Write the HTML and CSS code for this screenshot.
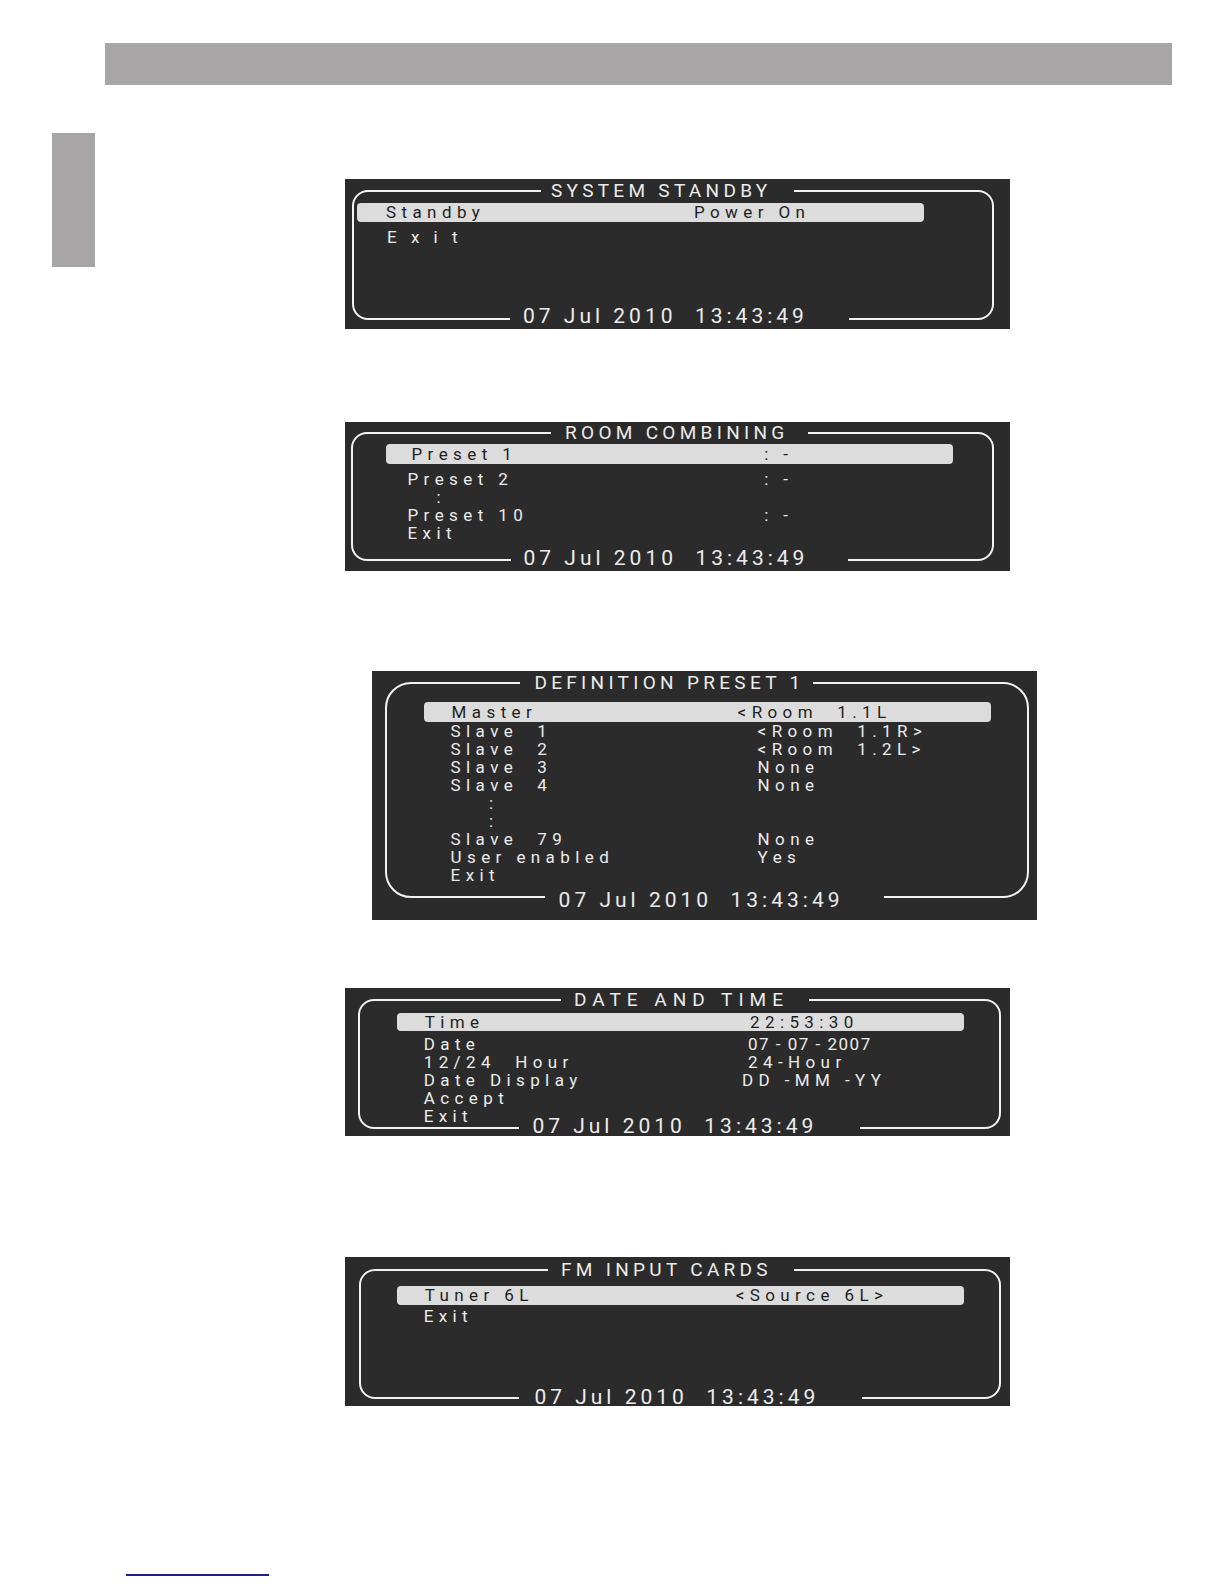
FILE: index.html
```html
<!DOCTYPE html>
<html lang="en">
<head>
<meta charset="utf-8">
<title>Menu screens</title>
<link rel="stylesheet" href="styles.css">
</head>
<body>
<div class="topbar"></div>
<div class="layout">
  <div class="tab"></div>
  <main class="screens">
    <section class="screen s1">
      <div class="frame">
        <div class="title">SYSTEM STANDBY</div>
        <div class="menu">
          <div class="row sel"><span class="k">Standby</span><span class="v">Power On</span></div>
          <div class="row"><span class="k">E x i t</span></div>
        </div>
        <div class="clock">07 Jul 2010  13:43:49</div>
      </div>
    </section>

    <section class="screen s2">
      <div class="frame">
        <div class="title">ROOM COMBINING</div>
        <div class="menu">
          <div class="row sel"><span class="k">Preset 1</span><span class="v">: -</span></div>
          <div class="row"><span class="k">Preset 2</span><span class="v">: -</span></div>
          <div class="row dots"><span class="k">:</span></div>
          <div class="row"><span class="k">Preset 10</span><span class="v">: -</span></div>
          <div class="row"><span class="k">Exit</span></div>
        </div>
        <div class="clock">07 Jul 2010  13:43:49</div>
      </div>
    </section>

    <section class="screen s3">
      <div class="frame">
        <div class="title">DEFINITION PRESET 1</div>
        <div class="menu">
          <div class="row sel"><span class="k">Master</span><span class="v">&lt;Room  1.1L</span></div>
          <div class="row"><span class="k">Slave  1</span><span class="v">&lt;Room  1.1R&gt;</span></div>
          <div class="row"><span class="k">Slave  2</span><span class="v">&lt;Room  1.2L&gt;</span></div>
          <div class="row"><span class="k">Slave  3</span><span class="v">None</span></div>
          <div class="row"><span class="k">Slave  4</span><span class="v">None</span></div>
          <div class="row dots"><span class="k">:</span></div>
          <div class="row dots"><span class="k">:</span></div>
          <div class="row"><span class="k">Slave  79</span><span class="v">None</span></div>
          <div class="row"><span class="k">User enabled</span><span class="v">Yes</span></div>
          <div class="row"><span class="k">Exit</span></div>
        </div>
        <div class="clock">07 Jul 2010  13:43:49</div>
      </div>
    </section>

    <section class="screen s4">
      <div class="frame">
        <div class="title">DATE AND TIME</div>
        <div class="menu">
          <div class="row sel"><span class="k">Time</span><span class="v">22:53:30</span></div>
          <div class="row"><span class="k">Date</span><span class="v tight">07 - 07 - 2007</span></div>
          <div class="row"><span class="k">12/24  Hour</span><span class="v">24-Hour</span></div>
          <div class="row"><span class="k">Date Display</span><span class="v shift">DD -MM -YY</span></div>
          <div class="row"><span class="k">Accept</span></div>
          <div class="row"><span class="k">Exit</span></div>
        </div>
        <div class="clock">07 Jul 2010  13:43:49</div>
      </div>
    </section>

    <section class="screen s5">
      <div class="frame">
        <div class="title">FM INPUT CARDS</div>
        <div class="menu">
          <div class="row sel"><span class="k">Tuner 6L</span><span class="v">&lt;Source 6L&gt;</span></div>
          <div class="row"><span class="k">Exit</span></div>
        </div>
        <div class="clock">07 Jul 2010  13:43:49</div>
      </div>
    </section>
  </main>
</div>
<div class="footer-line"></div>
</body>
</html>
```
FILE: styles.css
```css
* { box-sizing: border-box; }

body {
  margin: 0;
  width: 1224px;
  background: #ffffff;
  font-family: Roboto, "Liberation Sans", sans-serif;
}

.topbar {
  margin: 43px 0 0 105px;
  width: 1067px;
  height: 42px;
  background: #a7a5a5;
}

.layout {
  display: flex;
  align-items: flex-start;
}

.tab {
  flex: none;
  margin: 48px 0 0 52px;
  width: 43px;
  height: 134px;
  background: #a7a5a5;
}

.screens {
  margin-left: 250px;
  padding-top: 94px;
  display: flex;
  flex-direction: column;
  align-items: flex-start;
}

.screen {
  width: 665px;
  background: #2b2b2b;
}

.frame {
  position: relative;
  height: 100%;
  border: 2px solid #f2f2f2;
  border-radius: 16px;
  color: #ececec;
  font-size: 17px;
  letter-spacing: 5.4px;
}

.title,
.clock,
.k,
.v {
  white-space: pre;
}

.title {
  position: absolute;
  top: -12px;
  height: 22px;
  line-height: 22px;
  background: #2b2b2b;
  font-size: 19px;
  letter-spacing: 4.3px;
}

.clock {
  position: absolute;
  height: 16px;
  line-height: 16px;
  background: #2b2b2b;
  font-size: 21px;
  letter-spacing: 4px;
}

.menu {
  width: 567px;
  margin: var(--mt) 0 0 var(--ml);
}

.row {
  display: flex;
  align-items: center;
  height: var(--row-h);
  line-height: var(--row-h);
  padding-left: var(--pl);
}

.row .k {
  flex: none;
  width: var(--kw);
}

.row.sel {
  height: var(--sel-h);
  line-height: var(--sel-h);
  padding-left: var(--sel-pl);
  background: #dcdcdc;
  color: #1e1e1e;
  border-radius: 4px;
}

.row.sel .k { width: var(--sel-kw); }

.sel + .row { margin-top: var(--gap); }

.row.dots { padding-left: var(--dots); }

.tight { letter-spacing: 1.5px; }
.shift { margin-left: -6px; }

/* SYSTEM STANDBY */
.s1 {
  height: 150px;
  padding: 11px 16px 9px 7px;
  --mt: 11px; --ml: 3px;
  --sel-h: 19px; --sel-pl: 29px; --sel-kw: 308px;
  --gap: 6px; --row-h: 19px; --pl: 30px; --kw: 300px;
}
.s1 .row:not(.sel) { letter-spacing: 5px; }
.s1 .title { left: 187px; width: 253px; padding-left: 10px; }
.s1 .clock { left: 156px; width: 339px; padding-left: 13px; bottom: -6px; }

/* ROOM COMBINING */
.s2 {
  margin-top: 93px;
  height: 149px;
  padding: 10px 16px 10px 6px;
  --mt: 10px; --ml: 32.5px;
  --sel-h: 20px; --sel-pl: 26px; --sel-kw: 352.7px;
  --gap: 6px; --row-h: 18px; --pl: 22px; --kw: 356.7px; --dots: 51px;
}
.s2 .title { left: 198px; width: 257px; padding-left: 14px; }
.s2 .clock { left: 157.5px; width: 337px; padding-left: 13px; bottom: -7px; }

/* DEFINITION PRESET 1 */
.s3 {
  margin: 100px 0 0 27px;
  height: 249px;
  padding: 11px 8px 22px 13px;
  --mt: 18px; --ml: 37.3px;
  --sel-h: 20px; --sel-pl: 27.3px; --sel-kw: 286px;
  --gap: 0px; --row-h: 18px; --pl: 26.3px; --kw: 307px; --dots: 64.7px;
}
.s3 .frame { border-radius: 26px; }
.s3 .title { left: 133px; width: 293px; padding-left: 14.4px; }
.s3 .clock { left: 157.6px; width: 339.5px; padding-left: 14px; bottom: -12px; }

/* DATE AND TIME */
.s4 {
  margin-top: 68px;
  height: 148px;
  padding: 11px 9px 7px 13px;
  --mt: 12.2px; --ml: 37.4px;
  --sel-h: 18px; --sel-pl: 27.3px; --sel-kw: 325.3px;
  --gap: 4px; --row-h: 18px; --pl: 26.3px; --kw: 324.3px;
}
.s4 .title { left: 201px; width: 248px; padding-left: 13px; letter-spacing: 6px; }
.s4 .clock { left: 159.4px; width: 340.7px; padding-left: 13px; bottom: -7px; }

/* FM INPUT CARDS */
.s5 {
  margin-top: 121px;
  height: 149px;
  padding: 12px 9px 7px 14px;
  --mt: 15.2px; --ml: 36.4px;
  --sel-h: 19px; --sel-pl: 27.3px; --sel-kw: 311px;
  --gap: 2.3px; --row-h: 18px; --pl: 26.3px; --kw: 300px;
}
.s5 .title { left: 187px; width: 245.5px; padding-left: 13px; }
.s5 .clock { left: 158.4px; width: 343px; padding-left: 15px; bottom: -8px; }

.footer-line {
  margin: 168px 0 0 126px;
  width: 143px;
  height: 2px;
  background: #1f1f8c;
}
```
